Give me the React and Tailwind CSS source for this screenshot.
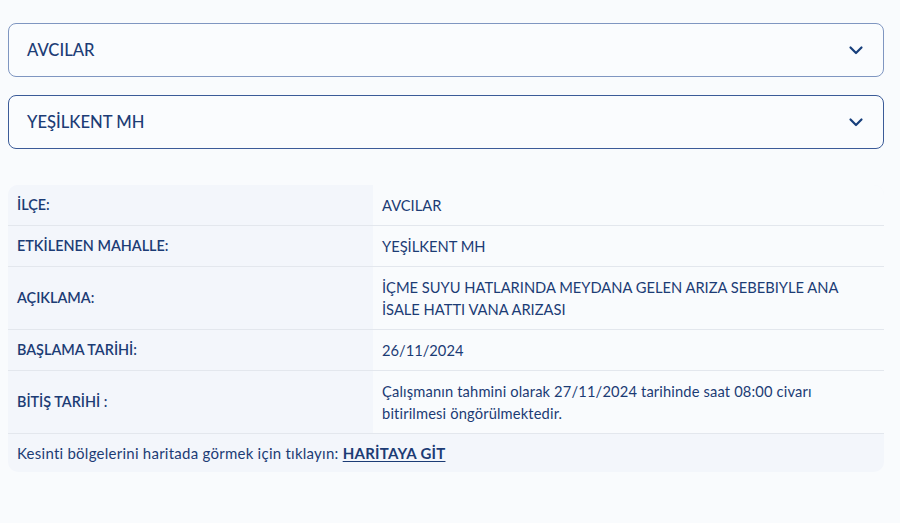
import React from 'react';

const rows = [
  { label: 'İLÇE:', value: 'AVCILAR' },
  { label: 'ETKİLENEN MAHALLE:', value: 'YEŞİLKENT MH' },
  {
    label: 'AÇIKLAMA:',
    value: 'İÇME SUYU HATLARINDA MEYDANA GELEN ARIZA SEBEBIYLE ANA İSALE HATTI VANA ARIZASI',
  },
  { label: 'BAŞLAMA TARİHİ:', value: '26/11/2024' },
  {
    label: 'BİTİŞ TARİHİ :',
    value: 'Çalışmanın tahmini olarak 27/11/2024 tarihinde saat 08:00 civarı bitirilmesi öngörülmektedir.',
    lower: true,
  },
];

const Chevron = () => (
  <svg className="w-4 h-4 text-[#173f7c]" viewBox="0 0 16 16" fill="none" stroke="currentColor" strokeWidth="2.2" strokeLinecap="round" strokeLinejoin="round">
    <path d="M2.5 5.5 8 11l5.5-5.5" />
  </svg>
);

const SelectBox = ({ value, borderClass }) => (
  <button
    className={`w-full h-[54px] flex items-center justify-between pl-[18px] pr-[19px] bg-[#fafcfe] border rounded-lg text-left ${borderClass}`}
  >
    <span className="text-[16.6px] font-medium text-[#1d3d76]">{value}</span>
    <Chevron />
  </button>
);

export default function App() {
  return (
    <div
      className="min-h-[523px] w-full bg-[#f9fbfd] pl-2 pr-4 pt-[23px] text-[#1c3c75]"
      style={{ fontFamily: 'Lato, "Noto Sans", sans-serif' }}
    >
      <div className="flex flex-col gap-[18px]">
        <SelectBox value="AVCILAR" borderClass="border-[#7f96c1]" />
        <SelectBox value="YEŞİLKENT MH" borderClass="border-[#3b5b98]" />
      </div>

      <div className="mt-9 w-full rounded-[10px] overflow-hidden bg-[#f3f6fb] leading-[22px]">
        {rows.map((row) => (
          <div key={row.label} className="flex border-b border-[#e3e7ed]">
            <div className="w-[365px] shrink-0 flex items-center px-[9px] py-[9px] text-[14.4px] font-semibold bg-[#f3f6fb]">
              {row.label}
            </div>
            <div
              className={`flex-1 flex items-center pl-[9px] pr-10 py-[9px] text-[14.7px] bg-[#f9fbfd] ${
                row.lower ? 'tracking-[0.15px]' : ''
              }`}
            >
              {row.value}
            </div>
          </div>
        ))}
        <div className="px-[9px] py-[8px] text-[15px] tracking-[0.25px] leading-[22px]">
          Kesinti bölgelerini haritada görmek için tıklayın:{' '}
          <a href="#" className="font-bold underline underline-offset-2">
            HARİTAYA GİT
          </a>
        </div>
      </div>
    </div>
  );
}
